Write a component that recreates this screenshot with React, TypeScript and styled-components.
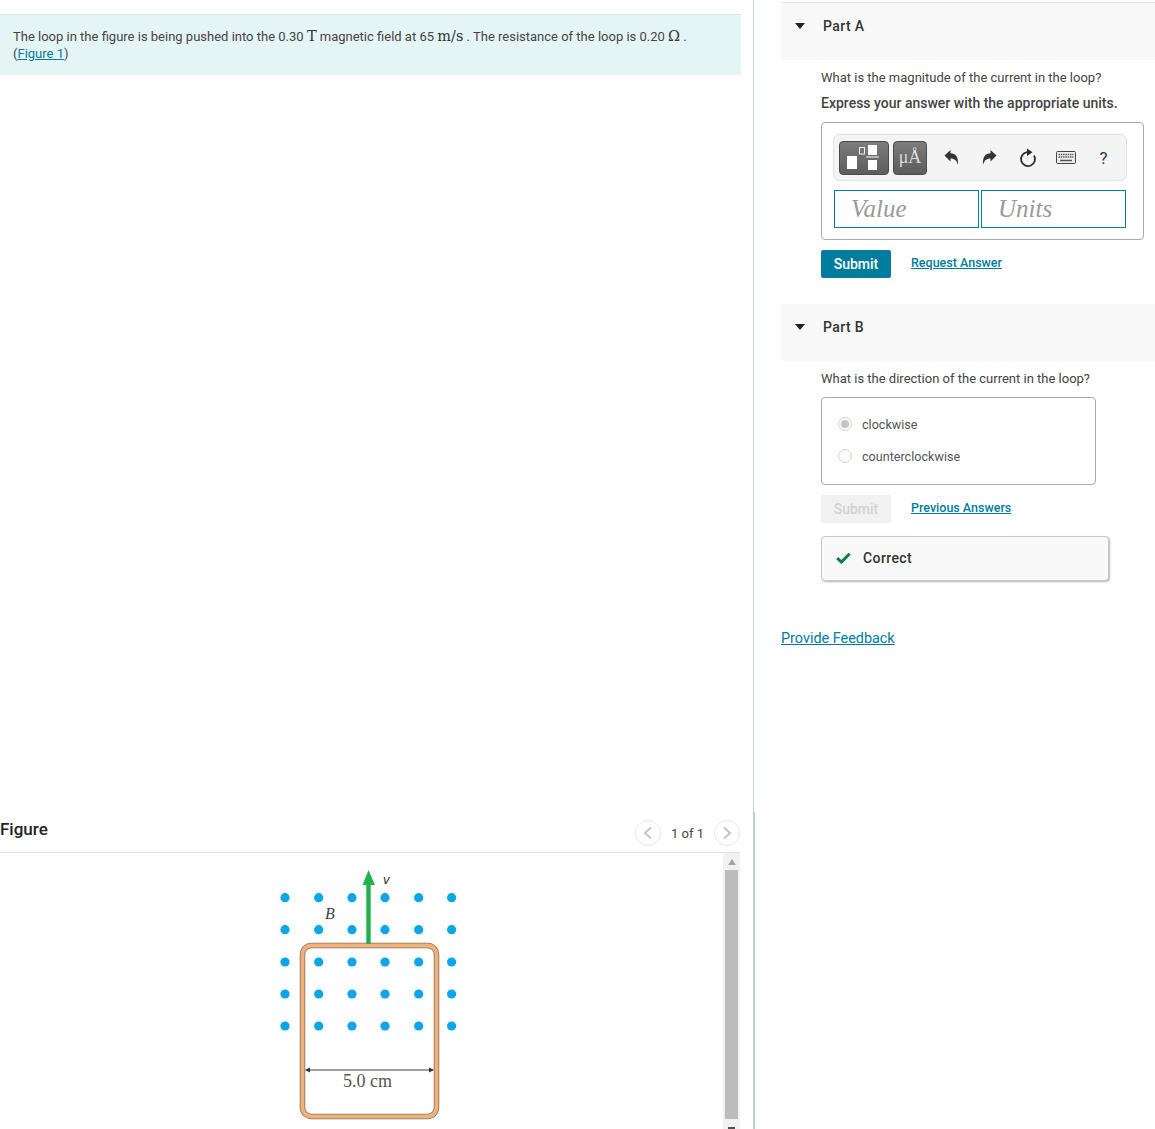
import styled, { createGlobalStyle } from "styled-components";

const GlobalStyle = createGlobalStyle`
  html, body {
    margin: 0;
    padding: 0;
    background: #fff;
    overflow: hidden;
  }
  body {
    font-family: Roboto, "Liberation Sans", sans-serif;
    font-size: 13px;
    color: #333;
  }
`;

const TEAL = "#007c9e";

const Page = styled.div`
  display: flex;
  width: 1155px;
  height: 1129px;
  overflow: hidden;
`;

const LeftColumn = styled.div`
  display: flex;
  flex-direction: column;
  width: 741px;
  flex: none;
  padding-top: 14px;
  box-sizing: border-box;
`;

const Intro = styled.div`
  height: 61px;
  box-sizing: border-box;
  padding: 13px 13px 0;
  background: #e5f5f6;
  border-top: 1px solid #d9e3e6;
  line-height: 17px;
  color: #444;
`;

const MathText = styled.span`
  font-family: "DejaVu Serif", serif;
  font-size: 14.5px;
  line-height: 0;
  color: #333;
`;

const Link = styled.a`
  color: ${TEAL};
  text-decoration: underline;
`;

const FigureHeader = styled.div`
  display: flex;
  align-items: center;
  justify-content: space-between;
  height: 48px;
  margin: 730px 1px 0 0;
  padding-bottom: 1px;
  box-sizing: border-box;
  border-bottom: 1px solid #e0e0e0;
`;

const FigureTitle = styled.div`
  font-size: 17px;
  font-weight: 500;
  color: #222;
  margin-top: 2px;
`;

const Pager = styled.div`
  display: flex;
  align-items: center;
  gap: 10px;
  margin-top: 10px;
  font-size: 13px;
  color: #444;
`;

const PagerButton = styled.div`
  display: flex;
  align-items: center;
  justify-content: center;
  width: 26px;
  height: 26px;
  box-sizing: border-box;
  border: 1px solid #e6e6e6;
  border-radius: 50%;
`;

const FigureBody = styled.div`
  display: flex;
  flex: 1;
  min-height: 0;
`;

const FigureCanvas = styled.div`
  flex: 1;
  padding-left: 260px;
`;

const FigureSvg = styled.svg`
  display: block;
`;

const Scrollbar = styled.div`
  display: flex;
  flex-direction: column;
  align-items: center;
  width: 17px;
  margin-right: 1px;
  background: #f1f1f1;
`;

const ScrollUp = styled.div`
  width: 0;
  height: 0;
  margin: 6px 0 5px;
  border-left: 4px solid transparent;
  border-right: 4px solid transparent;
  border-bottom: 6px solid #a3a3a3;
`;

const ScrollThumb = styled.div`
  width: 13px;
  height: 249px;
  background: #bcbcbc;
`;

const ScrollDown = styled.div`
  width: 7px;
  height: 2px;
  margin-top: 8px;
  background: #505050;
`;

const Divider = styled.div`
  display: flex;
  flex-direction: column;
  align-items: center;
  width: 3px;
  flex: none;
  margin: 0 26px 0 11px;
`;

const DividerTop = styled.div`
  width: 1px;
  height: 812px;
  background: #c3d3e0;
`;

const DividerBottom = styled.div`
  width: 2px;
  flex: 1;
  background: #b9cddf;
`;

const RightColumn = styled.div`
  flex: 1;
  padding-top: 2px;
`;

const PartHeader = styled.div<{ $ruled?: boolean }>`
  display: flex;
  align-items: center;
  gap: 18px;
  height: ${(p) => (p.$ruled ? 58 : 57)}px;
  box-sizing: border-box;
  padding: 0 0 12px 14px;
  background: #f8f8f8;
  border-top: ${(p) => (p.$ruled ? "1px solid #e2e2e2" : "none")};
  font-size: 14px;
  letter-spacing: 0.4px;
  font-weight: 500;
  color: #333;
`;

const Caret = styled.div`
  width: 0;
  height: 0;
  border-left: 5.5px solid transparent;
  border-right: 5.5px solid transparent;
  border-top: 6px solid #222;
`;

const PartBody = styled.div`
  padding-left: 40px;
`;

const Question = styled.div`
  margin-top: 9px;
  line-height: 18px;
  color: #444;
`;

const Instruction = styled.div`
  margin-top: 7px;
  line-height: 18px;
  font-size: 14px;
  font-weight: 500;
  color: #444;
`;

const AnswerBox = styled.div`
  width: 323px;
  height: 118px;
  margin-top: 10px;
  padding: 11px 0 0 11px;
  box-sizing: border-box;
  border: 1px solid #aaa;
  border-radius: 4px;
`;

const Toolbar = styled.div`
  display: flex;
  align-items: center;
  width: 294px;
  height: 47px;
  box-sizing: border-box;
  padding-left: 5px;
  background: #f4f4f4;
  border: 1px solid #e2e2e2;
  border-radius: 6px;
`;

const TemplateButton = styled.div<{ $width: number }>`
  display: flex;
  flex: none;
  align-items: center;
  justify-content: center;
  width: ${(p) => p.$width}px;
  height: 34px;
  margin-right: 4px;
  box-sizing: border-box;
  background: linear-gradient(#7c7c7c, #5c5c5c);
  border: 1px solid #4a4a4a;
  border-radius: 4px;
`;

const UnitsGlyph = styled.span`
  font-family: "Liberation Serif", serif;
  font-size: 18px;
  color: #dcdcdc;
`;

const ToolIcon = styled.div`
  display: flex;
  flex: none;
  align-items: center;
  justify-content: center;
  width: 38px;
  font-size: 17px;
  color: #333;
`;

const ToolIcons = styled.div`
  display: flex;
  align-items: center;
  height: 100%;
  margin-left: 1.5px;
`;

const Inputs = styled.div`
  display: flex;
  gap: 2px;
  margin-top: 9px;
  margin-left: 1px;
`;

const InputCell = styled.div`
  width: 145px;
  height: 38px;
  box-sizing: border-box;
  padding-left: 16px;
  border: 1px solid ${TEAL};
  font-family: "Liberation Serif", serif;
  font-style: italic;
  font-size: 25px;
  line-height: 35px;
  color: #9a9a9a;
`;

const ActionRow = styled.div`
  display: flex;
  align-items: flex-start;
  gap: 20px;
  margin-top: 10px;
`;

const SubmitButton = styled.div<{ $disabled?: boolean }>`
  width: 70px;
  height: 28px;
  border-radius: 2px;
  text-align: center;
  line-height: 28px;
  font-size: 14px;
  font-weight: 500;
  background: ${(p) => (p.$disabled ? "#f1f1f1" : TEAL)};
  color: ${(p) => (p.$disabled ? "#d2d2d2" : "#fff")};
`;

const ActionLink = styled(Link)`
  font-size: 12.5px;
  font-weight: 500;
  line-height: 25px;
`;

const PartSpacer = styled.div`
  height: 26px;
`;

const RadioBox = styled.div`
  display: flex;
  flex-direction: column;
  gap: 14px;
  width: 275px;
  height: 88px;
  margin-top: 9px;
  padding: 17px 0 0 16px;
  box-sizing: border-box;
  border: 1px solid #aaa;
  border-radius: 4px;
`;

const RadioRow = styled.div`
  display: flex;
  align-items: center;
  gap: 10px;
  height: 18px;
  font-size: 12.6px;
  color: #555;
`;

const Radio = styled.div<{ $checked?: boolean }>`
  display: flex;
  align-items: center;
  justify-content: center;
  width: 14px;
  height: 14px;
  box-sizing: border-box;
  border: 1px solid #d4d4d4;
  border-radius: 50%;
  background: #f9f9f9;

  &::after {
    content: "";
    display: ${(p) => (p.$checked ? "block" : "none")};
    width: 8px;
    height: 8px;
    border-radius: 50%;
    background: #c4c4c4;
  }
`;

const Feedback = styled.div`
  display: flex;
  align-items: center;
  gap: 12px;
  width: 288px;
  height: 45px;
  margin-top: 13px;
  padding: 0 0 2px 14px;
  box-sizing: border-box;
  background: #f9f9f9;
  border: 1px solid #c8c8c8;
  border-radius: 4px;
  box-shadow: 1px 1px 2px #b8b8b8;
  font-size: 14px;
  letter-spacing: 0.4px;
  font-weight: 500;
  color: #333;
`;

const ProvideFeedback = styled(Link)`
  display: block;
  margin-top: 49px;
  line-height: 18px;
  font-size: 14.4px;
`;

const dotColumns = [285, 318.7, 352, 385, 418.7, 451.6];
const dotRows = [897.7, 929.7, 962, 994, 1026];

function PagerChevron({ flip }: { flip?: boolean }) {
  return (
    <svg width="10" height="14" viewBox="0 0 10 14">
      <path
        d={flip ? "M2 1.5 L8 7 L2 12.5" : "M8 1.5 L2 7 L8 12.5"}
        fill="none"
        stroke="#c4c4c4"
        strokeWidth="2"
      />
    </svg>
  );
}

function LoopFigure() {
  return (
    <FigureSvg width="210" height="276" viewBox="260 853 210 276">
      {dotRows.map((y) =>
        dotColumns.map((x) => (
          <circle key={`${x}-${y}`} cx={x} cy={y} r="4.6" fill="#0aa6e8" />
        ))
      )}
      <rect x="302.5" y="945.5" width="134" height="171" rx="9" fill="none" stroke="#8a7460" strokeWidth="5.5" />
      <rect x="302.5" y="945.5" width="134" height="171" rx="9" fill="none" stroke="#f0b27a" strokeWidth="3.8" />
      <rect x="366.3" y="884" width="4.4" height="60" fill="#22b14c" />
      <path d="M368.5 870 L375 885 L362.5 885 Z" fill="#22b14c" />
      <text x="383" y="884" fontFamily="Liberation Sans, sans-serif" fontStyle="italic" fontSize="13" fill="#333">
        v
      </text>
      <text x="325" y="919" fontFamily="Liberation Serif, serif" fontStyle="italic" fontSize="16" fill="#444">
        B
      </text>
      <line x1="306" y1="1070" x2="433" y2="1070" stroke="#444" strokeWidth="1" />
      <path d="M305 1070 L310 1067.5 L310 1072.5 Z" fill="#333" />
      <path d="M434 1070 L429 1067.5 L429 1072.5 Z" fill="#333" />
      <text x="367.5" y="1087" textAnchor="middle" fontFamily="Liberation Serif, serif" fontSize="18" fill="#555">
        5.0 cm
      </text>
    </FigureSvg>
  );
}

function TemplateIcon() {
  return (
    <svg width="48" height="32" viewBox="1 1 48 32">
      <rect x="8" y="15" width="10" height="13" fill="#fff" />
      <rect x="20.5" y="6.5" width="5" height="6.5" fill="none" stroke="#eee" strokeWidth="1" />
      <rect x="29" y="4" width="9" height="10" fill="#fff" />
      <rect x="27" y="15.5" width="13" height="1" fill="#fff" />
      <rect x="29" y="19" width="9" height="10" fill="#fff" />
    </svg>
  );
}

function UndoIcon({ flip }: { flip?: boolean }) {
  return (
    <svg width="15" height="17" viewBox="0 0 15 17" transform={flip ? "scale(-1 1)" : undefined}>
      <path
        d="M0.5 6.5 L6.5 1 L6.5 4.2 C11.5 4.2 14.5 7.5 14 16 C13 11.5 10.5 9.4 6.5 9.4 L6.5 12.5 Z"
        fill="#333"
      />
    </svg>
  );
}

function ResetIcon() {
  return (
    <svg width="18" height="20" viewBox="0 0 18 20">
      <path d="M8 4.1 A7 7 0 1 0 15.1 7.5" fill="none" stroke="#2b2b2b" strokeWidth="1.8" />
      <path d="M8 0.5 L13.5 4.3 L8 8 Z" fill="#2b2b2b" />
    </svg>
  );
}

function KeyboardIcon() {
  return (
    <svg width="20" height="13" viewBox="0 0 20 13">
      <rect x="0.5" y="0.5" width="19" height="12" rx="1" fill="#eee" stroke="#444" />
      <path d="M2.5 3.5 H17.5 M2.5 6 H17.5" stroke="#555" strokeWidth="1.3" strokeDasharray="1.5 0.8" />
      <path d="M4 9.5 H16" stroke="#555" strokeWidth="1.5" />
    </svg>
  );
}

function CheckIcon() {
  return (
    <svg width="15" height="12" viewBox="0 0 15 12">
      <path d="M1.2 6.2 L5.4 10 L13.6 1.8" fill="none" stroke="#0a8040" strokeWidth="3" />
    </svg>
  );
}

export default function App() {
  return (
    <>
      <GlobalStyle />
      <Page>
        <LeftColumn>
          <Intro>
            The loop in the figure is being pushed into the 0.30 <MathText>T</MathText> magnetic field at 65{" "}
            <MathText>m/s</MathText> . The resistance of the loop is 0.20 <MathText>Ω</MathText> .
            <br />(<Link>Figure 1</Link>)
          </Intro>
          <FigureHeader>
            <FigureTitle>Figure</FigureTitle>
            <Pager>
              <PagerButton>
                <PagerChevron />
              </PagerButton>
              <span>1 of 1</span>
              <PagerButton>
                <PagerChevron flip />
              </PagerButton>
            </Pager>
          </FigureHeader>
          <FigureBody>
            <FigureCanvas>
              <LoopFigure />
            </FigureCanvas>
            <Scrollbar>
              <ScrollUp />
              <ScrollThumb />
              <ScrollDown />
            </Scrollbar>
          </FigureBody>
        </LeftColumn>

        <Divider>
          <DividerTop />
          <DividerBottom />
        </Divider>

        <RightColumn>
          <PartHeader $ruled>
            <Caret />
            Part A
          </PartHeader>
          <PartBody>
            <Question>What is the magnitude of the current in the loop?</Question>
            <Instruction>Express your answer with the appropriate units.</Instruction>
            <AnswerBox>
              <Toolbar>
                <TemplateButton $width={50}>
                  <TemplateIcon />
                </TemplateButton>
                <TemplateButton $width={34}>
                  <UnitsGlyph>μÅ</UnitsGlyph>
                </TemplateButton>
                <ToolIcons>
                  <ToolIcon>
                    <UndoIcon />
                  </ToolIcon>
                  <ToolIcon>
                    <UndoIcon flip />
                  </ToolIcon>
                  <ToolIcon>
                    <ResetIcon />
                  </ToolIcon>
                  <ToolIcon>
                    <KeyboardIcon />
                  </ToolIcon>
                  <ToolIcon>?</ToolIcon>
                </ToolIcons>
              </Toolbar>
              <Inputs>
                <InputCell>Value</InputCell>
                <InputCell>Units</InputCell>
              </Inputs>
            </AnswerBox>
            <ActionRow>
              <SubmitButton>Submit</SubmitButton>
              <ActionLink>Request Answer</ActionLink>
            </ActionRow>
          </PartBody>
          <PartSpacer />
          <PartHeader>
            <Caret />
            Part B
          </PartHeader>
          <PartBody>
            <Question>What is the direction of the current in the loop?</Question>
            <RadioBox>
              <RadioRow>
                <Radio $checked />
                clockwise
              </RadioRow>
              <RadioRow>
                <Radio />
                counterclockwise
              </RadioRow>
            </RadioBox>
            <ActionRow>
              <SubmitButton $disabled>Submit</SubmitButton>
              <ActionLink>Previous Answers</ActionLink>
            </ActionRow>
            <Feedback>
              <CheckIcon />
              Correct
            </Feedback>
          </PartBody>
          <ProvideFeedback>Provide Feedback</ProvideFeedback>
        </RightColumn>
      </Page>
    </>
  );
}
